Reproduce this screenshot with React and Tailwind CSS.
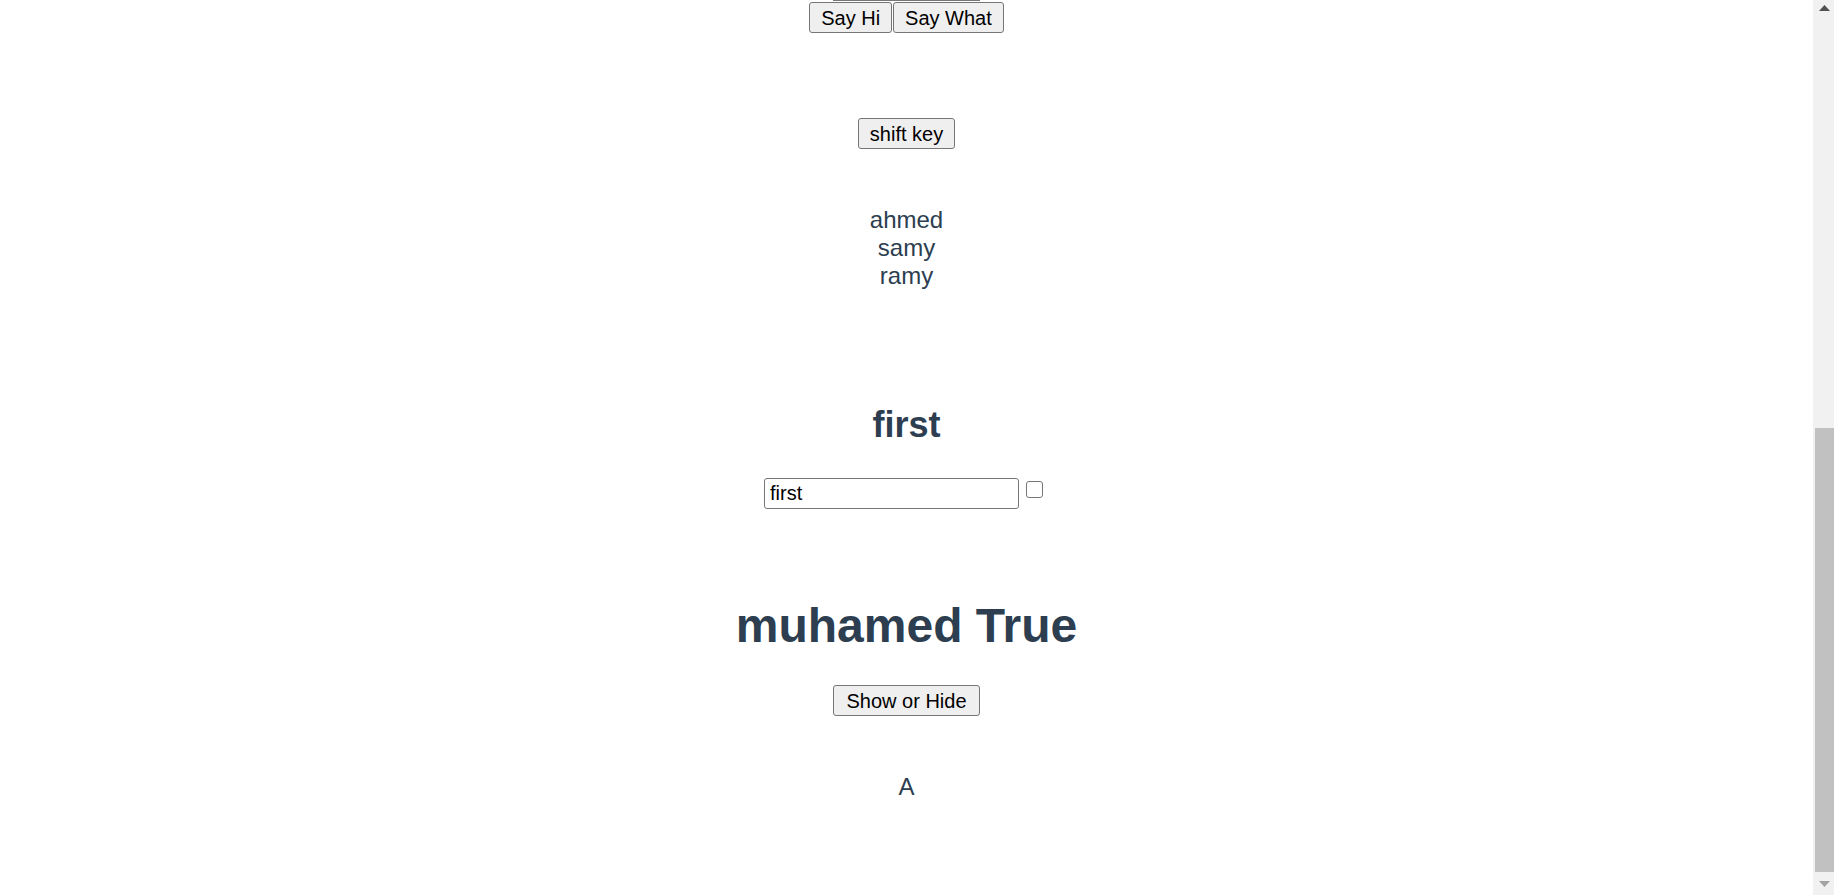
import React from "react";

const btn =
  "h-[31px] px-[11px] bg-[#efefef] border border-[#767676] rounded-[3px] text-[20px] leading-none text-black";

function FakeScrollbar() {
  return (
    <div className="w-[21px] h-[895px] bg-[#f1f1f1] flex flex-col shrink-0">
      {/* up arrow */}
      <div className="h-[21px] flex justify-center pl-[2px] pt-[5px]">
        <svg width="11" height="6" viewBox="0 0 11 6">
          <polygon points="5.5,0 11,6 0,6" fill="#505050" />
        </svg>
      </div>
      <div className="h-[407px]" />
      {/* thumb */}
      <div className="h-[444px] pl-[2px]">
        <div className="w-full h-full bg-[#c1c1c1]" />
      </div>
      {/* down arrow */}
      <div className="flex-1 flex justify-center pl-[2px] pt-[9px]">
        <svg width="11" height="6" viewBox="0 0 11 6">
          <polygon points="0,0 11,0 5.5,6" fill="#a3a3a3" />
        </svg>
      </div>
    </div>
  );
}

export default function App() {
  return (
    <div className="flex w-full h-[895px] overflow-hidden bg-white font-['Liberation_Sans',Arial,Helvetica,sans-serif]">
      <div className="flex-1 flex flex-col items-center text-center text-[#2c3e50]">
        {/* bottom edge of the element scrolled out of view */}
        <div className="w-[147px] h-px bg-[#767676]" />

        {/* Say buttons */}
        <div className="flex mt-[1px]">
          <button className={btn}>Say Hi</button>
          <button className={btn + " ml-px"}>Say What</button>
        </div>

        <button className={btn + " mt-[85px]"}>shift key</button>

        {/* names list */}
        <div className="mt-[57px] text-[24px] leading-[28px]">
          <div>ahmed</div>
          <div>samy</div>
          <div>ramy</div>
        </div>

        <h2 className="mt-[114px] text-[36px] leading-[41px] font-bold">first</h2>

        {/* input + checkbox */}
        <div className="flex items-start mt-[33px]">
          <input
            type="text"
            defaultValue="first"
            className="w-[255px] h-[31px] px-[5px] border border-[#767676] rounded-[3px] text-[20px] text-black outline-none"
          />
          <span className="w-[17px] h-[17px] mt-[3px] ml-[7px] mr-[6px] border-[1.5px] border-[#767676] rounded-[3px] bg-white" />
        </div>

        <h1 className="mt-[89px] text-[48px] leading-[55px] font-bold">muhamed True</h1>

        <button className={btn + " px-[12px] mt-[32px]"}>Show or Hide</button>

        <p className="mt-[57px] text-[24px] leading-[28px]">A</p>
      </div>
      <FakeScrollbar />
    </div>
  );
}
